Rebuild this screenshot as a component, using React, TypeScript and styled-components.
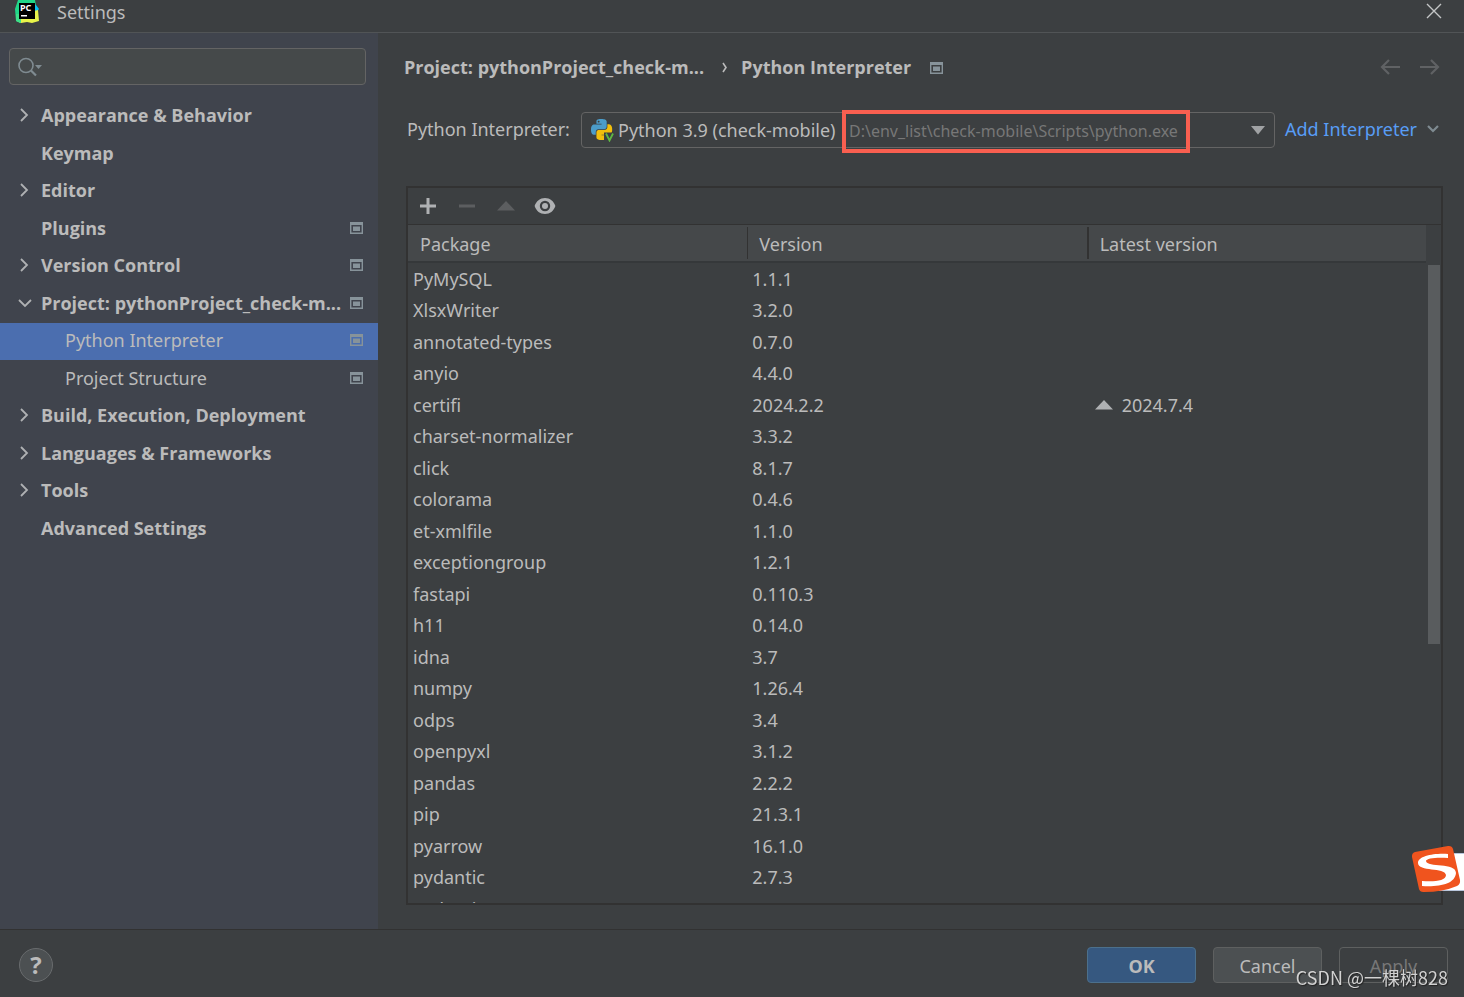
import React from "react";
import styled, { createGlobalStyle } from "styled-components";

const color = {
  panel: "#3c3f41",
  sidebar: "#40444d",
  text: "#bbbbbb",
  muted: "#777777",
  line: "#323232",
  field: "#45494a",
  border: "#646464",
  selected: "#4b6eaf",
  link: "#589df6",
  icon: "#afb1b3",
  iconOff: "#5c5e60",
  marker: "#87939a",
  highlight: "#f95f50",
};

const boldFont = `"Open Sans", "Noto Sans", sans-serif`;

const GlobalStyle = createGlobalStyle`
  * { box-sizing: border-box; }
  body {
    margin: 0;
    background: ${color.panel};
    color: ${color.text};
    font-family: "Noto Sans", "Open Sans", sans-serif;
    font-size: 18px;
    line-height: 24px;
  }
  button, select, input { font: inherit; color: inherit; }
  button { padding: 0; border: 0; background: none; }
  svg { display: block; flex: none; }
`;

const Window = styled.div`
  display: flex;
  flex-direction: column;
  height: 100vh;
  overflow: hidden;
`;

const TitleBar = styled.header`
  display: flex;
  align-items: flex-start;
  height: 33px;
  padding: 0 22px 0 14px;
  border-bottom: 1px solid #515456;
`;

const Title = styled.h1`
  flex: 1;
  margin: 0 0 0 17px;
  font-size: 18px;
  font-weight: 400;
`;

const CloseButton = styled.button`
  margin-top: 3px;
`;

const Body = styled.div`
  display: flex;
  flex: 1;
  min-height: 0;
`;

const Sidebar = styled.aside`
  flex: none;
  width: 378px;
  padding-top: 15px;
  background: ${color.sidebar};
`;

const SearchBox = styled.label`
  display: flex;
  align-items: center;
  height: 37px;
  margin: 0 12px 13px 9px;
  padding: 0 8px;
  border: 1px solid ${color.border};
  border-radius: 4px;
  background: ${color.field};
`;

const SearchInput = styled.input`
  flex: 1;
  min-width: 0;
  border: 0;
  outline: 0;
  background: none;
`;

const Tree = styled.ul`
  margin: 0;
  padding: 0;
  list-style: none;
`;

const TreeItem = styled.li`
  height: 38px;
  &:nth-child(odd) { height: 37px; }
`;

const TreeButton = styled.button<{ $child?: boolean; $selected?: boolean }>`
  display: flex;
  align-items: center;
  width: 100%;
  height: 100%;
  padding: 0 15px 3px ${(p) => (p.$child ? 42 : 18)}px;
  background: ${(p) => (p.$selected ? color.selected : "transparent")};
  font-family: ${(p) => (p.$child ? "inherit" : boldFont)};
  font-weight: ${(p) => (p.$child ? 400 : 700)};
  text-align: left;
  white-space: nowrap;
`;

const TreeArrow = styled.span`
  flex: none;
  width: 23px;
`;

const TreeLabel = styled.span`
  flex: 1;
  min-width: 0;
`;

const Content = styled.main`
  display: flex;
  flex: 1;
  flex-direction: column;
  min-width: 0;
  padding: 22px 21px 24px 26px;
`;

const Breadcrumb = styled.nav`
  display: flex;
  align-items: center;
  height: 24px;
  padding-right: 3px;
  font-family: ${boldFont};
  font-weight: 700;
  white-space: nowrap;
`;

const CrumbSeparator = styled.span`
  width: 37px;
  padding-left: 18px;
`;

const CrumbMarker = styled.span`
  flex: 1;
  padding: 1px 0 0 19px;
`;

const HistoryButton = styled.button`
  margin-left: 20px;
`;

const InterpreterRow = styled.div`
  display: flex;
  align-items: center;
  height: 36px;
  margin: 33px 4px 38px 3px;
  white-space: nowrap;
`;

const FieldLabel = styled.label`
  width: 174px;
  padding-bottom: 2px;
`;

const Combo = styled.div`
  display: flex;
  flex: 1;
  align-items: center;
  min-width: 0;
  height: 36px;
  padding: 0 9px;
  border: 1px solid ${color.border};
  border-radius: 4px;
`;

const ComboSelect = styled.select`
  min-width: 225px;
  margin-left: 4px;
  padding: 0;
  border: 0;
  outline: 0;
  appearance: none;
  background: ${color.panel};
`;

const InterpreterPath = styled.span`
  flex: 1;
  padding-top: 2px;
  color: ${color.muted};
  font-size: 16px;
`;

const PathText = styled.span`
  position: relative;
  padding-left: 6px;
  &::after {
    position: absolute;
    inset: -10px -12px -11px -1px;
    border: 4px solid ${color.highlight};
    content: "";
  }
`;

const AddLink = styled.a`
  display: flex;
  align-items: center;
  justify-content: space-between;
  width: 154px;
  margin-left: 10px;
  padding-bottom: 2px;
  color: ${color.link};
  text-decoration: none;
`;

const PackagePanel = styled.section`
  display: flex;
  flex: 1;
  flex-direction: column;
  min-height: 0;
  margin-left: 2px;
  border: 2px solid ${color.line};
`;

const Toolbar = styled.div`
  display: flex;
  flex: none;
  align-items: center;
  gap: 19px;
  height: 37px;
  padding: 0 10px;
  border-bottom: 1px solid ${color.line};
`;

const ToolButton = styled.button`
  display: flex;
  align-items: center;
  justify-content: center;
  width: 20px;
  height: 20px;
`;

const TableArea = styled.div`
  display: flex;
  flex: 1;
  min-height: 0;
  overflow: hidden;
`;

const TableClip = styled.div`
  flex: 1;
  min-width: 0;
`;

const Table = styled.table`
  width: 100%;
  border-collapse: separate;
  border-spacing: 0;
  table-layout: fixed;
`;

const HeadCell = styled.th`
  height: 38px;
  padding: 0;
  border-bottom: 2px solid #35383a;
  background: #45484a;
  font-weight: 400;
  text-align: left;
`;

const HeadLabel = styled.div`
  height: 32px;
  padding: 5px 12px 3px;
  th + th > & {
    border-left: 1px solid ${color.line};
    padding-left: 11px;
  }
  th:last-child > & {
    border-left-width: 2px;
  }
`;

const Row = styled.tr`
  height: 32px;
  &:nth-child(odd) { height: 31px; }
`;

const Cell = styled.td`
  padding: 0 5px;
  white-space: nowrap;
`;

const Upgrade = styled.span`
  display: flex;
  align-items: center;
  gap: 9px;
  padding-left: 3px;
`;

const ScrollTrack = styled.div`
  flex: none;
  width: 15px;
  padding: 40px 1px 0 2px;
`;

const ScrollThumb = styled.div`
  height: 379px;
  background: #595c5e;
`;

const Footer = styled.footer`
  display: flex;
  flex: none;
  align-items: center;
  gap: 17px;
  height: 68px;
  padding: 2px 16px 0 19px;
  border-top: 1px solid ${color.line};
`;

const HelpButton = styled.button`
  width: 34px;
  height: 34px;
  margin-right: auto;
  border: 1px solid #686b6d;
  border-radius: 50%;
  background: #4c5052;
  font-family: ${boldFont};
  font-size: 24px;
  font-weight: 700;
`;

const DialogButton = styled.button<{ $kind?: "primary" | "disabled" }>`
  width: 109px;
  height: 36px;
  padding-top: 2px;
  border: 1px solid ${(p) => (p.$kind === "primary" ? "#4c708c" : "#5e6060")};
  border-radius: 4px;
  background: ${(p) =>
    p.$kind === "primary" ? "#365880" : p.$kind === "disabled" ? "transparent" : "#4c5052"};
  color: ${(p) => (p.$kind === "disabled" ? color.muted : color.text)};
  font-weight: ${(p) => (p.$kind === "primary" ? 700 : 400)};
`;

const Watermark = styled.div`
  position: fixed;
  right: 16px;
  bottom: 8px;
  color: #d2d2d2;
  font-family: "Noto Sans CJK SC", sans-serif;
  font-size: 18px;
  text-shadow: 1px 1px 1px #222;
  white-space: nowrap;
`;

const InputMethodBadge = styled.div`
  position: fixed;
  right: 0;
  bottom: 101px;
`;

const Marker = () => (
  <svg width="13" height="12" viewBox="0 0 13 12" fill={color.marker}>
    <path fillRule="evenodd" d="M0 0h13v12H0zM1.4 3v7.6h10.2V3z" />
    <path d="M3 4.5h7v4.5H3z" />
  </svg>
);

const Chevron = ({ open }: { open?: boolean }) => (
  <svg width="14" height="14" viewBox="0 0 14 14" fill="none" stroke={color.icon} strokeWidth="1.8">
    <path d={open ? "M1 4l6 6 6-6" : "M3 1l6 6-6 6"} />
  </svg>
);

const AppLogo = () => (
  <svg width="26" height="24" viewBox="0 0 26 24">
    <path d="M4 0L15-3l6 3 2 12-17 11-4-2L1 9z" fill="#21d789" />
    <path d="M18 4l4 1 3 4-3 4h-4z" fill="#07c3f2" />
    <path d="M5 17l15-6 4-1 1 11-7 2-5-1-6 1-4-2z" fill="#e9f44a" />
    <path d="M2 14l5 0v9l-5-2z" fill="#3be08a" />
    <path d="M5 3h16v16H5z" fill="#000" />
    <text x="6" y="11" fill="#fff" fontSize="9" fontWeight="700">PC</text>
    <path d="M7 15h6v1.5H7z" fill="#fff" />
  </svg>
);

const SearchIcon = () => (
  <svg width="26" height="20" viewBox="0 0 26 20" fill="none" stroke="#7f8b91" strokeWidth="1.6">
    <circle cx="8" cy="8.5" r="7" />
    <path d="M13 13.5l5 5" strokeWidth="2.2" />
    <path d="M17 8h7l-3.500 4z" fill="#7f8b91" stroke="none" />
  </svg>
);

const PythonIcon = () => (
  <svg width="23" height="24" viewBox="0 0 23 24">
    <g transform="translate(0 1) scale(.88)">
      <path
        fill="#4b9cc9"
        d="M14.25.18l.9.2.73.26.59.3.45.32.34.34.25.34.16.33.1.3.04.26.02.2-.01.13V8.5l-.05.63-.13.55-.21.46-.26.38-.3.31-.33.25-.35.19-.35.14-.33.1-.3.07-.26.04-.21.02H8.77l-.69.05-.59.14-.5.22-.41.27-.33.32-.27.35-.2.36-.15.37-.1.35-.07.32-.04.27-.02.21v3.06H3.17l-.21-.03-.28-.07-.32-.12-.35-.18-.36-.26-.36-.36-.35-.46-.32-.59-.28-.73-.21-.88-.14-1.05-.05-1.23.06-1.22.16-1.04.24-.87.32-.71.36-.57.4-.44.42-.33.42-.24.4-.16.36-.1.32-.05.24-.01h.16l.06.01h8.16v-.83H6.18l-.01-2.75-.02-.37.05-.34.11-.31.17-.28.25-.26.31-.23.38-.2.44-.18.51-.15.58-.12.64-.1.71-.06.77-.04.84-.02 1.27.05zm-6.3 1.98l-.23.33-.08.41.08.41.23.34.33.22.41.09.41-.09.33-.22.23-.34.08-.41-.08-.41-.23-.33-.33-.22-.41-.09-.41.09z"
      />
      <path
        fill="#f2bf0c"
        d="M21.04 6.11l.28.06.32.12.35.18.36.27.36.35.35.47.32.59.28.73.21.88.14 1.04.05 1.23-.06 1.23-.16 1.04-.24.86-.32.71-.36.57-.4.45-.42.33-.42.24-.4.16-.36.09-.32.05-.24.02-.16-.01h-8.22v.82h5.84l.01 2.76.02.36-.05.34-.11.31-.17.29-.25.25-.31.24-.38.2-.44.17-.51.15-.58.13-.64.09-.71.07-.77.04-.84.01-1.27-.04-1.07-.14-.9-.2-.73-.25-.59-.3-.45-.33-.34-.34-.25-.34-.16-.33-.1-.3-.04-.25-.02-.2.01-.13v-5.34l.05-.64.13-.54.21-.46.26-.38.3-.32.33-.24.35-.2.35-.14.33-.1.3-.06.26-.04.21-.02.13-.01h5.84l.69-.05.59-.14.5-.21.41-.28.33-.32.27-.35.2-.36.15-.36.1-.35.07-.32.04-.28.02-.21V6.07h2.09l.14.01z"
      />
    </g>
    <path d="M13 14.500h10v9.500h-10z" fill={color.panel} />
    <path d="M15 15.500l3.500 7 3.500-7" fill="none" stroke="#5fb843" strokeWidth="1.800" />
  </svg>
);

const Arrow = ({ right }: { right?: boolean }) => (
  <svg width="20" height="16" viewBox="0 0 20 16" fill="none" stroke="#606264" strokeWidth="2.2">
    <path d={right ? "M0 8h18M11 1l7 7-7 7" : "M20 8H2M9 1L2 8l7 7"} />
  </svg>
);

const UpTriangle = ({ fill }: { fill: string }) => (
  <svg width="18" height="10" viewBox="0 0 18 10" fill={fill}>
    <path d="M9 0l9 9.500H0z" />
  </svg>
);

type TreeEntry = { label: string; arrow?: "open" | "closed"; marker?: boolean; child?: boolean; selected?: boolean };

const tree: TreeEntry[] = [
  { label: "Appearance & Behavior", arrow: "closed" },
  { label: "Keymap" },
  { label: "Editor", arrow: "closed" },
  { label: "Plugins", marker: true },
  { label: "Version Control", arrow: "closed", marker: true },
  { label: "Project: pythonProject_check-m...", arrow: "open", marker: true },
  { label: "Python Interpreter", child: true, marker: true, selected: true },
  { label: "Project Structure", child: true, marker: true },
  { label: "Build, Execution, Deployment", arrow: "closed" },
  { label: "Languages & Frameworks", arrow: "closed" },
  { label: "Tools", arrow: "closed" },
  { label: "Advanced Settings" },
];

const packages: [string, string, string?][] = [
  ["PyMySQL", "1.1.1"],
  ["XlsxWriter", "3.2.0"],
  ["annotated-types", "0.7.0"],
  ["anyio", "4.4.0"],
  ["certifi", "2024.2.2", "2024.7.4"],
  ["charset-normalizer", "3.3.2"],
  ["click", "8.1.7"],
  ["colorama", "0.4.6"],
  ["et-xmlfile", "1.1.0"],
  ["exceptiongroup", "1.2.1"],
  ["fastapi", "0.110.3"],
  ["h11", "0.14.0"],
  ["idna", "3.7"],
  ["numpy", "1.26.4"],
  ["odps", "3.4"],
  ["openpyxl", "3.1.2"],
  ["pandas", "2.2.2"],
  ["pip", "21.3.1"],
  ["pyarrow", "16.1.0"],
  ["pydantic", "2.7.3"],
  ["pydantic-core", "2.18.4"],
];

export default function App() {
  return (
    <>
      <GlobalStyle />
      <Window>
        <TitleBar>
          <AppLogo />
          <Title>Settings</Title>
          <CloseButton aria-label="Close">
            <svg width="16" height="16" viewBox="0 0 16 16" stroke="#c4c6c7" strokeWidth="1.4">
              <path d="M1 1l14 14M15 1L1 15" />
            </svg>
          </CloseButton>
        </TitleBar>

        <Body>
          <Sidebar>
            <SearchBox>
              <SearchIcon />
              <SearchInput type="text" aria-label="Search settings" />
            </SearchBox>
            <Tree>
              {tree.map((item) => (
                <TreeItem key={item.label}>
                  <TreeButton $child={item.child} $selected={item.selected}>
                    <TreeArrow>{item.arrow && <Chevron open={item.arrow === "open"} />}</TreeArrow>
                    <TreeLabel>{item.label}</TreeLabel>
                    {item.marker && <Marker />}
                  </TreeButton>
                </TreeItem>
              ))}
            </Tree>
          </Sidebar>

          <Content>
            <Breadcrumb aria-label="Breadcrumb">
              <span>Project: pythonProject_check-m...</span>
              <CrumbSeparator>
                <svg width="6" height="11" viewBox="0 0 6 11" fill="none" stroke={color.text} strokeWidth="1.6">
                  <path d="M1 1l3 4.500-3 4.500" />
                </svg>
              </CrumbSeparator>
              <span>Python Interpreter</span>
              <CrumbMarker>
                <Marker />
              </CrumbMarker>
              <HistoryButton aria-label="Back">
                <Arrow />
              </HistoryButton>
              <HistoryButton aria-label="Forward">
                <Arrow right />
              </HistoryButton>
            </Breadcrumb>

            <InterpreterRow>
              <FieldLabel htmlFor="interpreter">Python Interpreter:</FieldLabel>
              <Combo>
                <PythonIcon />
                <ComboSelect id="interpreter">
                  <option>Python 3.9 (check-mobile)</option>
                </ComboSelect>
                <InterpreterPath>
                  <PathText>D:\env_list\check-mobile\Scripts\python.exe</PathText>
                </InterpreterPath>
                <svg width="14" height="9" viewBox="0 0 14 9" fill="#a0a2a4">
                  <path d="M0 0h14L7 8.500z" />
                </svg>
              </Combo>
              <AddLink href="#add">
                Add Interpreter
                <svg width="12" height="10" viewBox="0 0 12 10" fill="none" stroke="#7f8b91" strokeWidth="2.2">
                  <path d="M1 2l5 5 5-5" />
                </svg>
              </AddLink>
            </InterpreterRow>

            <PackagePanel>
              <Toolbar>
                <ToolButton aria-label="Install package">
                  <svg width="20" height="20" viewBox="0 0 20 20" stroke={color.icon} strokeWidth="3">
                    <path d="M10 2v16M2 10h16" />
                  </svg>
                </ToolButton>
                <ToolButton aria-label="Uninstall package">
                  <svg width="20" height="20" viewBox="0 0 20 20" stroke={color.iconOff} strokeWidth="3">
                    <path d="M2 10h16" />
                  </svg>
                </ToolButton>
                <ToolButton aria-label="Upgrade package">
                  <UpTriangle fill={color.iconOff} />
                </ToolButton>
                <ToolButton aria-label="Show early releases">
                  <svg width="22" height="18" viewBox="0 0 22 18">
                    <path
                      fill={color.icon}
                      fillRule="evenodd"
                      d="M11 1C6 1 2.300 4 .6 9c1.700 5 5.400 8 10.400 8s8.700-3 10.400-8C19.700 4 16 1 11 1zm0 2.800a5.200 5.200 0 110 10.400 5.200 5.200 0 010-10.400z"
                    />
                    <circle cx="11" cy="9" r="3" fill={color.icon} />
                  </svg>
                </ToolButton>
              </Toolbar>
              <TableArea>
                <TableClip>
                  <Table>
                    <thead>
                      <tr>
                        {["Package", "Version", "Latest version"].map((name) => (
                          <HeadCell key={name} scope="col">
                            <HeadLabel>{name}</HeadLabel>
                          </HeadCell>
                        ))}
                      </tr>
                    </thead>
                    <tbody>
                      {packages.map(([name, version, latest]) => (
                        <Row key={name}>
                          <Cell>{name}</Cell>
                          <Cell>{version}</Cell>
                          <Cell>
                            {latest && (
                              <Upgrade>
                                <UpTriangle fill={color.icon} />
                                {latest}
                              </Upgrade>
                            )}
                          </Cell>
                        </Row>
                      ))}
                    </tbody>
                  </Table>
                </TableClip>
                <ScrollTrack>
                  <ScrollThumb />
                </ScrollTrack>
              </TableArea>
            </PackagePanel>
          </Content>
        </Body>

        <Footer>
          <HelpButton aria-label="Help">?</HelpButton>
          <DialogButton $kind="primary">OK</DialogButton>
          <DialogButton>Cancel</DialogButton>
          <DialogButton $kind="disabled" disabled>
            Apply
          </DialogButton>
        </Footer>
      </Window>

      <Watermark>CSDN @一棵树828</Watermark>
      <InputMethodBadge>
        <svg width="54" height="52" viewBox="0 0 54 52">
          <path d="M28 9.500h27v37H28z" fill="#fff" stroke="#b9c6dc" />
          <path
            d="M5 8l33-6q4-.5 5 3l7 31q.6 4-3 6-14 6-33 6-4 .4-5-3L2 13q-.4-4 3-5z"
            fill="#f0541e"
          />
          <path
            d="M38 10C24 9 8 12 8 19c0 9 27 4 28 12 0 6-12 7-24 6l0 5c18 1 33-2 34-13 0-11-29-5-30-12 0-3 12-4 22-3z"
            fill="#fff"
          />
        </svg>
      </InputMethodBadge>
    </>
  );
}
